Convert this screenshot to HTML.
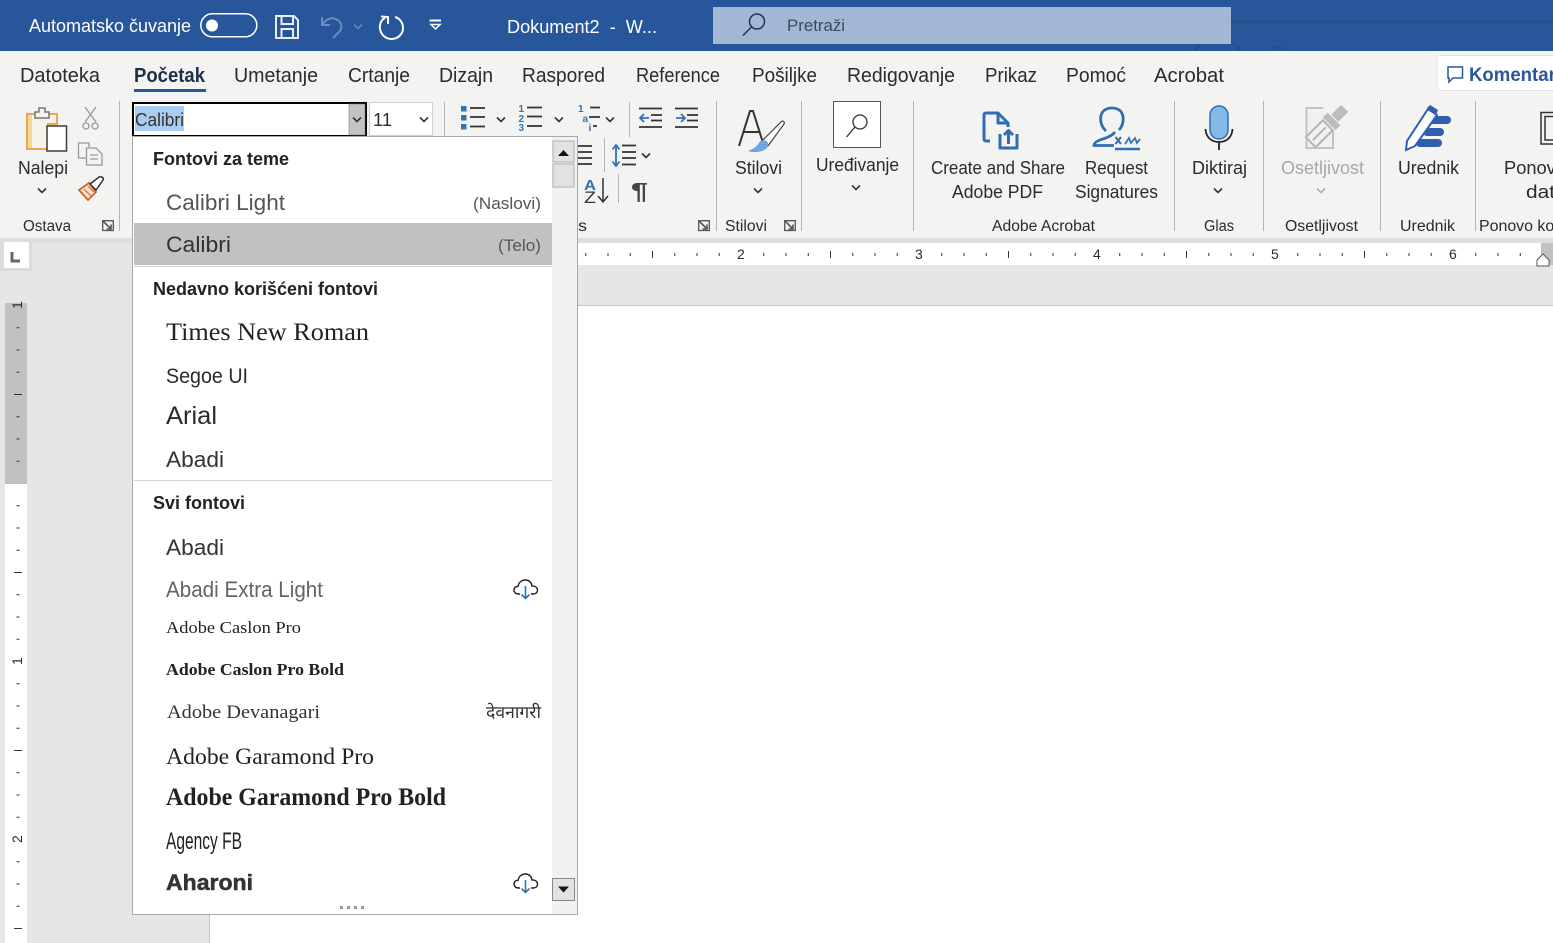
<!DOCTYPE html>
<html lang="sr"><head><meta charset="utf-8"><title>Word</title>
<style>
html,body{margin:0;padding:0;width:1553px;height:943px;overflow:hidden;background:#fff}
svg{display:block}
text{font-family:"Liberation Sans",sans-serif;fill:#2b2b2b;white-space:pre}
.t{font-size:20px}
.r{font-size:18px}
.h{font-size:18px;font-weight:bold;fill:#222}
.g{font-size:15.5px}
.s{font-family:"Liberation Serif",serif}
.w{fill:#fff}
.n{font-size:14px}
.b{font-size:10px;font-weight:bold;fill:#2e75b6}
</style></head><body>
<svg xmlns="http://www.w3.org/2000/svg" width="1553" height="943" viewBox="0 0 1553 943">
<defs>
<path id="c" d="M-4-2.500L0 1.500L4-2.500" fill="none" stroke="#333" stroke-width="1.600"/>
<g id="l" fill="none" stroke="#555" stroke-width="1.300"><path d="M.7.700H11.300V10.500H.7Z"/><path d="M.7.700 9 9M4.500 9H9V4.500" stroke-width="1.600"/></g>
<g id="cl" fill="none"><path d="M7 16H5.500C2.500 16 1 14 1 12C1 9.500 3 8 5 8.500C5.800 4 9 2 12.500 2C16 2 18.500 4.500 19 8C22 7.800 24.500 9.500 24.500 12C24.500 14.500 22.800 16 20 16H18" stroke="#222" stroke-width="1.400"/><path d="M12.500 8V20M8.500 16.500L12.500 20.500L16.500 16.500" stroke="#2e75b6" stroke-width="1.600"/></g>
</defs>

<!-- title bar -->
<rect width="1553" height="51" fill="#27569b"/>
<rect x="1231" y="20" width="322" height="3" fill="#25508f"/>
<path d="M1195 51C1200 38 1232 33 1240 51M1272 51C1274 45 1280 45 1284 51" fill="none" stroke="#25508f" stroke-width="3"/>
<text class="r w" x="29" y="32" textLength="162" lengthAdjust="spacingAndGlyphs">Automatsko čuvanje</text>
<rect x="200.800" y="13.800" width="56" height="23" rx="11.500" fill="none" stroke="#fff" stroke-width="1.500"/>
<circle cx="212" cy="25.500" r="6" fill="#fff"/>
<g fill="none" stroke="#e8eef7" stroke-width="2">
<path d="M276 16H294L298 20V38H276Z"/><path d="M281.500 16V24H293V16M281.500 38V29H293V38"/>
</g>
<g fill="none" stroke="#6e8cbc" stroke-width="2"><path d="M322 17V25H330"/><path d="M322.500 24.500C326 19 331 17 336 19C342 22 343 28 339 32L333 38"/></g>
<path d="M354 24.500L358 28.500L362 24.500" fill="none" stroke="#6e8cbc" stroke-width="1.500"/>
<g fill="none" stroke="#fff" stroke-width="2"><path d="M385 18C380 20.500 379.500 26 380 29C381 35 386 39 391.500 39C398 39 403 34 403 28C403 22 399 18 395 17"/><path d="M381 16.500L388 17V24"/></g>
<path d="M429.500 20.500H441" stroke="#fff" stroke-width="2"/>
<path d="M431 24.500H440L435.500 29Z" fill="none" stroke="#fff" stroke-width="1.500"/>
<text class="r w" x="507" y="33" textLength="150" lengthAdjust="spacingAndGlyphs">Dokument2  -  W...</text>
<rect x="713" y="7" width="518" height="37" fill="#a3b6d4"/>
<g fill="none" stroke="#1d3557" stroke-width="1.500"><circle cx="757" cy="21.500" r="7.500"/><path d="M751.500 27L743 35.500"/></g>
<text class="r" x="787" y="31" textLength="58" lengthAdjust="spacingAndGlyphs" style="fill:#3c4a60;font-size:17px">Pretraži</text>

<!-- ribbon -->
<rect y="51" width="1553" height="187" fill="#f3f3f2"/>
<text class="t" x="20" y="82" textLength="80" lengthAdjust="spacingAndGlyphs">Datoteka</text>
<text class="t" x="134" y="82" textLength="71" lengthAdjust="spacingAndGlyphs" style="font-weight:bold;fill:#1f2f4a">Početak</text>
<rect x="134" y="89" width="72" height="3" fill="#2b579a"/>
<text class="t" x="234" y="82" textLength="84" lengthAdjust="spacingAndGlyphs">Umetanje</text>
<text class="t" x="348" y="82" textLength="62" lengthAdjust="spacingAndGlyphs">Crtanje</text>
<text class="t" x="439" y="82" textLength="54" lengthAdjust="spacingAndGlyphs">Dizajn</text>
<text class="t" x="522" y="82" textLength="83" lengthAdjust="spacingAndGlyphs">Raspored</text>
<text class="t" x="636" y="82" textLength="84" lengthAdjust="spacingAndGlyphs">Reference</text>
<text class="t" x="752" y="82" textLength="65" lengthAdjust="spacingAndGlyphs">Pošiljke</text>
<text class="t" x="847" y="82" textLength="108" lengthAdjust="spacingAndGlyphs">Redigovanje</text>
<text class="t" x="985" y="82" textLength="52" lengthAdjust="spacingAndGlyphs">Prikaz</text>
<text class="t" x="1066" y="82" textLength="60" lengthAdjust="spacingAndGlyphs">Pomoć</text>
<text class="t" x="1154" y="82" textLength="70" lengthAdjust="spacingAndGlyphs">Acrobat</text>
<rect x="1437" y="55.500" width="130" height="35" rx="3" fill="#fff" stroke="#e2e2e2"/>
<path d="M1448 67H1462.500V78H1453L1449 82V78H1448Z" fill="none" stroke="#2b579a" stroke-width="1.500"/>
<text x="1469" y="81" textLength="92" lengthAdjust="spacingAndGlyphs" style="font-size:19px;font-weight:bold;fill:#2b579a">Komentari</text>

<!-- separators -->
<g stroke="#b4b4b4" stroke-width="1">
<path d="M119.500 101V231M444.500 102V136M629.500 102V137M716.500 101V231M801.500 101V231M913.500 101V231M1174.500 101V231M1263.500 101V231M1380.500 101V231M1475.500 101V231M604.500 138V172M618.500 174V203"/>
</g>

<!-- clipboard -->
<path d="M27 114H57V124H48V149H27Z" fill="#f8f3e8" stroke="#e6a94f" stroke-width="2"/>
<rect x="28" y="115" width="4" height="33" fill="#f6d596"/>
<path d="M35 118V112H39V108H45V112H49V118Z" fill="#f3f3f2" stroke="#777" stroke-width="1.500"/>
<rect x="47" y="126" width="19.500" height="25" fill="#fff" stroke="#3c3c3c" stroke-width="1.500"/>
<g fill="none" stroke="#999" stroke-width="1.300"><path d="M85 107L96 122M96 107L85 122"/><circle cx="86" cy="126" r="3"/><circle cx="95" cy="126" r="3"/>
<path d="M86 158H78.500V143H89V147M86.500 148H96L102 154V165H86.500Z" fill="#f3f3f2"/><path d="M90 155H98M90 159H98"/></g>
<path d="M79 190L89 183L96 192L88 200Z" fill="#f8e4d4" stroke="#d2622a" stroke-width="1.800"/>
<path d="M84 189L91 196M88 186L94 192" stroke="#d2622a" stroke-width="1.200"/>
<path d="M90 184L99 177C102 176 104 178 103 180L96 190Z" fill="#fff" stroke="#333" stroke-width="1.500"/>
<text class="r" x="18" y="174" textLength="50" lengthAdjust="spacingAndGlyphs">Nalepi</text>
<use href="#c" x="42" y="191"/>
<text class="g" x="23" y="231" textLength="48" lengthAdjust="spacingAndGlyphs">Ostava</text>
<use href="#l" x="102" y="220"/>

<!-- font combo -->
<rect x="133" y="103" width="233" height="33" fill="#fff" stroke="#000" stroke-width="2"/>
<rect x="135" y="106" width="49" height="25" fill="#a8cdf1"/>
<rect x="349" y="104" width="16" height="31" fill="#c3c3c3" stroke="#777" stroke-width=".5"/>
<use href="#c" x="357" y="120"/>
<text class="r" x="135" y="126" textLength="49" lengthAdjust="spacingAndGlyphs" style="fill:#333">Calibri</text>
<rect x="369.500" y="102.500" width="63" height="33" fill="#fff" stroke="#d0d0d0"/>
<text class="r" x="373" y="126" textLength="19" lengthAdjust="spacingAndGlyphs">11</text>
<use href="#c" x="424" y="120"/>

<!-- para icons -->
<g fill="#2e75b6"><rect x="461" y="106" width="5.500" height="5.500"/><rect x="461" y="115" width="5.500" height="5.500"/><rect x="461" y="124" width="5.500" height="5.500"/></g>
<path d="M470 108H485M470 117H485M470 126.500H485M527 107.500H542M527 116.500H542M527 126H542M590 107.500H600M589 117H600M593 126H597" stroke="#333" stroke-width="1.700"/>
<text class="b" x="518.500" y="112">1</text><text class="b" x="518.500" y="122">2</text><text class="b" x="518.500" y="131">3</text>
<text class="b" x="578" y="112">1</text><text class="b" x="582.500" y="122">a</text><text class="b" x="588.500" y="131">i</text>
<use href="#c" x="501" y="120"/><use href="#c" x="559" y="120"/><use href="#c" x="610" y="120"/>
<path d="M639 108.500H662M651 115H662M651 120.500H662M639 127H662M675 108.500H698M675 127H698M687 115H698M687 120.500H698" stroke="#333" stroke-width="1.700"/>
<path d="M649 118H640M644 114L640 118L644 122M676 118H685M681 114L685 118L681 122" fill="none" stroke="#2e75b6" stroke-width="1.800"/>
<path d="M578 146H592M578 152H592M578 158H592M578 164H592" stroke="#333" stroke-width="1.700"/>
<path d="M622 145.500H636M622 152H636M622 158H636M622 164.500H636" stroke="#333" stroke-width="1.700"/>
<path d="M616 146V165M612.500 149.500L616 145L619.500 149.500M612.500 161.500L616 166L619.500 161.500" fill="none" stroke="#2e75b6" stroke-width="1.800"/>
<use href="#c" x="646" y="156"/>
<text x="584" y="190" textLength="12" lengthAdjust="spacingAndGlyphs" style="font-size:15px;font-weight:bold;fill:#2e75b6">A</text>
<text x="584" y="203" textLength="12" lengthAdjust="spacingAndGlyphs" style="font-size:17px;fill:#333">Z</text>
<path d="M603 178V202M598 196L603 202L608 196" fill="none" stroke="#333" stroke-width="1.500"/>
<text x="631" y="199" textLength="17" lengthAdjust="spacingAndGlyphs" style="font-size:23px;font-weight:bold;fill:#444">¶</text>
<text class="g" x="578" y="231" textLength="9" lengthAdjust="spacingAndGlyphs">s</text>
<use href="#l" x="698" y="220"/>

<!-- styles -->
<path d="M739 146L750 111H753L764 146M743.500 132H760" fill="none" stroke="#333" stroke-width="2"/>
<path d="M762 141L781 122C783 120 785 122 784 124L768 146Z" fill="#fff" stroke="#444" stroke-width="1.200"/>
<path d="M749 151C756 153 765 151 768 146C769 141 763 139 760 142C758 146 754 149 749 151Z" fill="#6ea8e0" stroke="#5a96d2" stroke-width=".6"/>
<text class="r" x="735" y="174" textLength="47" lengthAdjust="spacingAndGlyphs">Stilovi</text>
<use href="#c" x="758" y="191"/>
<text class="g" x="725" y="231" textLength="42" lengthAdjust="spacingAndGlyphs">Stilovi</text>
<use href="#l" x="784" y="220"/>
<rect x="833.500" y="101.500" width="47" height="46" fill="#fff" stroke="#555"/>
<g fill="none" stroke="#333" stroke-width="1.300"><circle cx="860" cy="122" r="7"/><path d="M855 127L846.500 137"/></g>
<text class="r" x="816" y="171" textLength="83" lengthAdjust="spacingAndGlyphs">Uređivanje</text>
<use href="#c" x="856" y="188"/>

<!-- acrobat -->
<g fill="none" stroke="#2f6db5" stroke-width="3" stroke-linejoin="round">
<path d="M990 141H986C984.500 141 984 140 984 139V115C984 114 984.500 113 986 113H998L1008 123V127M998 113V123H1008"/>
<path d="M1000 134V148H1017V134M1008.500 144V131M1004 135L1008.500 130.500L1013 135"/>
</g>
<g fill="none" stroke="#2f6db5" stroke-width="2.800">
<path d="M1115 132C1112 136 1106 138 1100 140C1096 141.500 1094 143 1094 145.500H1114"/>
<path d="M1119 130C1125 124 1126 108 1112 108C1098 108 1098 124 1106 131"/>
<path d="M1115 149H1140" stroke-width="2.500"/>
<path d="M1115.500 137L1121 144M1121 137L1115.500 144" stroke-width="2"/>
<path d="M1125 144L1129 138L1131 143L1135 138L1137 143L1140 139" stroke-width="1.700"/>
</g>
<text class="r" x="931" y="174" textLength="134" lengthAdjust="spacingAndGlyphs">Create and Share</text>
<text class="r" x="952" y="198" textLength="91" lengthAdjust="spacingAndGlyphs">Adobe PDF</text>
<text class="r" x="1085" y="174" textLength="63" lengthAdjust="spacingAndGlyphs">Request</text>
<text class="r" x="1075" y="198" textLength="83" lengthAdjust="spacingAndGlyphs">Signatures</text>
<text class="g" x="992" y="231" textLength="103" lengthAdjust="spacingAndGlyphs">Adobe Acrobat</text>

<!-- mic -->
<rect x="1210" y="106" width="18" height="33" rx="9" fill="#84b9e8" stroke="#2f6db5" stroke-width="1.500"/>
<path d="M1205.500 129C1206 138 1212 142 1219 142C1226 142 1232 138 1232.500 129M1219 142V150" fill="none" stroke="#222" stroke-width="1.800"/>
<text class="r" x="1192" y="174" textLength="55" lengthAdjust="spacingAndGlyphs">Diktiraj</text>
<use href="#c" x="1218" y="191"/>
<text class="g" x="1204" y="231" textLength="30" lengthAdjust="spacingAndGlyphs">Glas</text>

<!-- sensitivity -->
<path d="M1323 108H1306.500V148H1333V131" fill="#f1f1f1" stroke="#c3c3c3" stroke-width="2"/>
<g transform="rotate(45 1327 126)"><rect x="1322" y="101" width="10" height="14" fill="#bdbdbd"/><rect x="1318" y="116" width="18" height="7" fill="#bdbdbd"/><rect x="1320" y="125" width="14" height="24" fill="#f1f1f1" stroke="#b5b5b5" stroke-width="2"/><path d="M1327 128V146" stroke="#b5b5b5" stroke-width="2"/></g>
<text class="r" x="1281" y="174" textLength="83" lengthAdjust="spacingAndGlyphs" style="fill:#a8a8a8">Osetljivost</text>
<path d="M1317 188.500L1321 192.500L1325 188.500" fill="none" stroke="#b0b0b0" stroke-width="1.600"/>
<text class="g" x="1285" y="231" textLength="73" lengthAdjust="spacingAndGlyphs">Osetljivost</text>

<!-- editor -->
<g fill="#2f5fae"><rect x="1428" y="116" width="23" height="8" rx="4"/><rect x="1423" y="128" width="21" height="8" rx="4"/><rect x="1416" y="139" width="26" height="8" rx="4"/></g>
<path d="M1406 150L1407 141L1428 109L1437 115L1415 146Z" fill="#fff" stroke="#2f5fae" stroke-width="2"/>
<path d="M1427 108L1430 105L1438 110L1436 115Z" fill="#2f5fae"/>
<text class="r" x="1398" y="174" textLength="61" lengthAdjust="spacingAndGlyphs">Urednik</text>
<text class="g" x="1400" y="231" textLength="55" lengthAdjust="spacingAndGlyphs">Urednik</text>
<path d="M1553 112.500H1541V144H1553M1553 116.500H1545V140H1553" fill="none" stroke="#333" stroke-width="1.500"/>
<text class="r" x="1504" y="174" textLength="62" lengthAdjust="spacingAndGlyphs">Ponovo</text>
<text class="r" x="1526" y="198" textLength="80" lengthAdjust="spacingAndGlyphs">datoteke</text>
<text class="g" x="1479" y="231" textLength="100" lengthAdjust="spacingAndGlyphs">Ponovo koristi</text>

<!-- workspace -->
<rect y="238" width="1553" height="68" fill="#e6e6e6"/>
<rect y="238" width="1553" height="5" fill="#dedede"/>
<rect x="0" y="306" width="209" height="637" fill="#e6e6e6"/>
<rect x="209" y="306" width="1" height="637" fill="#c4c4c4"/>
<rect y="305" x="209" width="1344" height="1" fill="#c4c4c4"/>

<!-- horizontal ruler -->
<rect x="570" y="243" width="971" height="22" fill="#fff"/>
<rect x="1541" y="243" width="12" height="22" fill="#c1c1c1"/>
<path d="M585.250 254.500H1540" stroke="#333" stroke-width="3" stroke-dasharray="1 21.250" fill="none"/>
<path d="M652.500 251V258M830.500 251V258M1008.500 251V258M1186.500 251V258M1364.500 251V258" stroke="#333" stroke-width="1"/>
<g fill="#fff"><rect x="734" y="248" width="14" height="14"/><rect x="912" y="248" width="14" height="14"/><rect x="1090" y="248" width="14" height="14"/><rect x="1268" y="248" width="14" height="14"/><rect x="1446" y="248" width="14" height="14"/></g>
<text class="n" x="737" y="259">2</text><text class="n" x="915" y="259">3</text><text class="n" x="1093" y="259">4</text><text class="n" x="1271" y="259">5</text><text class="n" x="1449" y="259">6</text>
<path d="M1537 266V260L1543 254L1549 260V266Z" fill="#fff" stroke="#555"/>

<!-- tab box + vertical ruler -->
<rect x="0" y="240" width="32" height="31" fill="#dcdcdc"/>
<rect x="4" y="242" width="25" height="26" fill="#fff"/>
<path d="M12 252V261H20" fill="none" stroke="#666" stroke-width="3"/>
<rect x="5" y="303" width="22" height="181" fill="#c1c1c1"/>
<rect x="5" y="484" width="22" height="459" fill="#fff"/>
<path d="M18 305V943" fill="none" stroke="#333" stroke-width="3" stroke-dasharray="1 21.250"/>
<path d="M14 394.500H22M14 572.500H22M14 750.500H22M14 928.500H22" stroke="#333"/>
<rect x="10" y="303" width="16" height="9" fill="#c1c1c1"/><rect x="10" y="477" width="16" height="7" fill="#c1c1c1"/><rect x="10" y="484" width="16" height="6" fill="#fff"/>
<rect x="10" y="654" width="16" height="14" fill="#fff"/><rect x="10" y="832" width="16" height="14" fill="#fff"/>
<g><text class="n" transform="translate(22 309) rotate(-90)">1</text><text class="n" transform="translate(22 665) rotate(-90)">1</text><text class="n" transform="translate(22 843) rotate(-90)">2</text></g>

<!-- dropdown -->
<rect x="132.500" y="136.500" width="445" height="778" fill="#fff" stroke="#a8a8a8"/>
<rect x="552" y="137" width="25" height="777" fill="#f1f1f0"/>
<rect x="553" y="141" width="21" height="21" fill="#e2e2e0" stroke="#b0b0b0"/>
<path d="M558 156L563.500 150L569 156Z" fill="#111"/>
<rect x="553" y="164" width="21" height="23" fill="#e2e2e0" stroke="#b0b0b0"/>
<rect x="552.500" y="878.500" width="22" height="22" fill="#e2e2e0" stroke="#888"/>
<path d="M558 886.500H569L563.500 892.500Z" fill="#111"/>
<rect x="134" y="223" width="418" height="42" fill="#c1c1c1"/>
<rect x="134" y="266" width="418" height="1" fill="#d2d2d2"/>
<rect x="134" y="480" width="418" height="1" fill="#d2d2d2"/>
<text class="h" x="153" y="165" textLength="136" lengthAdjust="spacingAndGlyphs">Fontovi za teme</text>
<text x="166" y="210" textLength="119" lengthAdjust="spacingAndGlyphs" style="font-size:22px;fill:#555">Calibri Light</text>
<text x="473" y="209" textLength="68" lengthAdjust="spacingAndGlyphs" style="font-size:17px;fill:#555">(Naslovi)</text>
<text x="166" y="252" textLength="65" lengthAdjust="spacingAndGlyphs" style="font-size:22px;fill:#333">Calibri</text>
<text x="498" y="251" textLength="43" lengthAdjust="spacingAndGlyphs" style="font-size:17px;fill:#555">(Telo)</text>
<text class="h" x="153" y="295" textLength="225" lengthAdjust="spacingAndGlyphs">Nedavno korišćeni fontovi</text>
<text class="s" x="166" y="340" textLength="203" lengthAdjust="spacingAndGlyphs" style="font-size:25px;fill:#222">Times New Roman</text>
<text x="166" y="383" textLength="82" lengthAdjust="spacingAndGlyphs" style="font-size:21px">Segoe UI</text>
<text x="166" y="424" textLength="51" lengthAdjust="spacingAndGlyphs" style="font-size:25px">Arial</text>
<text x="166" y="467" textLength="58" lengthAdjust="spacingAndGlyphs" style="font-size:22px;fill:#333">Abadi</text>
<text class="h" x="153" y="509" textLength="92" lengthAdjust="spacingAndGlyphs">Svi fontovi</text>
<text x="166" y="555" textLength="58" lengthAdjust="spacingAndGlyphs" style="font-size:22px;fill:#333">Abadi</text>
<text x="166" y="597" textLength="157" lengthAdjust="spacingAndGlyphs" style="font-size:22px;fill:#6a625c">Abadi Extra Light</text>
<use href="#cl" x="513" y="578"/>
<text class="s" x="166" y="633" textLength="135" lengthAdjust="spacingAndGlyphs" style="font-size:17px;fill:#222">Adobe Caslon Pro</text>
<text class="s" x="166" y="675" textLength="178" lengthAdjust="spacingAndGlyphs" style="font-size:17px;font-weight:bold;fill:#222">Adobe Caslon Pro Bold</text>
<text class="s" x="167" y="718" textLength="153" lengthAdjust="spacingAndGlyphs" style="font-size:19px;fill:#333">Adobe Devanagari</text>
<text x="486" y="718" textLength="55" lengthAdjust="spacingAndGlyphs" style="font-size:17px;fill:#333">देवनागरी</text>
<text class="s" x="166" y="764" textLength="208" lengthAdjust="spacingAndGlyphs" style="font-size:23px;fill:#222">Adobe Garamond Pro</text>
<text class="s" x="166" y="805" textLength="280" lengthAdjust="spacingAndGlyphs" style="font-size:25px;font-weight:bold;fill:#222">Adobe Garamond Pro Bold</text>
<text x="166" y="849" textLength="76" lengthAdjust="spacingAndGlyphs" style="font-size:24px;fill:#222">Agency FB</text>
<text x="166" y="890" textLength="87" lengthAdjust="spacingAndGlyphs" style="font-size:22px;font-weight:bold;fill:#333;stroke:#333;stroke-width:.5px">Aharoni</text>
<use href="#cl" x="513" y="872"/>
<path d="M340 907.500H365" stroke="#999" stroke-width="3" stroke-dasharray="3 4" fill="none"/>
</svg>
</body></html>
